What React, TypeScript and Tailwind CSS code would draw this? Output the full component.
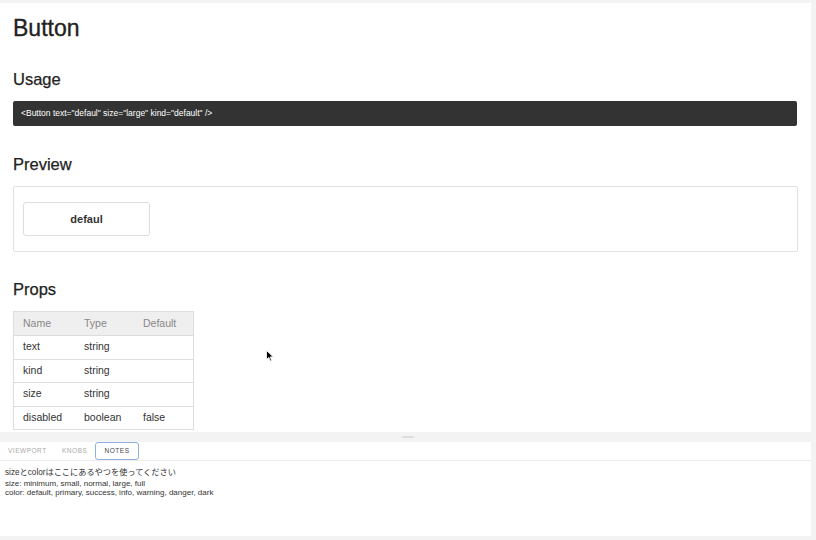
import React from "react";

const rows = [
  ["text", "string", ""],
  ["kind", "string", ""],
  ["size", "string", ""],
  ["disabled", "boolean", "false"],
];

export default function App() {
  return (
    <div className="w-[816px] h-[540px] bg-[#f3f3f3] flex flex-col overflow-hidden text-[#333]" style={{ fontFamily: '"Liberation Sans", "Noto Sans CJK JP", sans-serif' }}>
      <div className="h-[3px] shrink-0" />
      <div className="relative w-[811px] h-[429px] shrink-0 bg-white px-[13px] pt-[11px] flex flex-col overflow-hidden">
        <h1 className="shrink-0 text-[23px] leading-[28px] font-normal text-[#222] [-webkit-text-stroke:0.35px_#222]">Button</h1>
        <h2 className="shrink-0 mt-[27px] text-[16.5px] leading-[20px] text-[#222] [-webkit-text-stroke:0.25px_#222]">Usage</h2>
        <div className="shrink-0 mt-[12px] w-[784px] h-[25px] bg-[#333] rounded-[2px] px-[8px] flex items-center text-white text-[8.5px]">
          {'<Button text="defaul" size="large" kind="default" />'}
        </div>
        <h2 className="shrink-0 mt-[28px] text-[16.5px] leading-[20px] text-[#222] [-webkit-text-stroke:0.25px_#222]">Preview</h2>
        <div className="shrink-0 mt-[12px] w-[785px] h-[66px] border border-[#e2e2e2] rounded-[2px] px-[9px] pt-[15px]">
          <div className="w-[127px] h-[34px] border border-[#ddd] rounded-[3px] flex items-center justify-center text-[11px] font-bold text-[#333]">
            defaul
          </div>
        </div>
        <h2 className="shrink-0 mt-[27px] text-[16.5px] leading-[20px] text-[#222] [-webkit-text-stroke:0.25px_#222]">Props</h2>
        <div className="shrink-0 mt-[12px] w-[181px] border border-[#ddd] text-[10.5px]">
          <div className="h-[23px] bg-[#efefef] flex items-center text-[#888]">
            <div className="w-[61px] pl-[9px]">Name</div>
            <div className="w-[59px] pl-[9px]">Type</div>
            <div className="pl-[9px]">Default</div>
          </div>
          {rows.map((r) => (
            <div key={r[0]} className="h-[23.5px] border-t border-[#ddd] flex items-center text-[#333]">
              <div className="w-[61px] pl-[9px]">{r[0]}</div>
              <div className="w-[59px] pl-[9px]">{r[1]}</div>
              <div className="pl-[9px]">{r[2]}</div>
            </div>
          ))}
        </div>
        <svg className="absolute left-[266px] top-[347px]" width="8" height="12" viewBox="0 0 8 12">
          <path d="M0.5 0.5 L0.5 9.5 L2.8 7.4 L4.3 11 L5.6 10.4 L4.2 6.9 L7.3 6.9 Z" fill="#000" stroke="#fff" strokeWidth="0.8" />
        </svg>
      </div>
      <div className="h-[10px] shrink-0 flex items-center justify-center">
        <div className="w-[12px] h-[2px] bg-[#dcdcdc] rounded" />
      </div>
      <div className="w-[811px] h-[94px] shrink-0 bg-white flex flex-col">
        <div className="h-[19px] border-b border-[#ececec] flex items-stretch text-[6.5px] tracking-[0.08em]">
          <div className="ml-[8px] w-[40px] flex items-center text-[#aaa]">VIEWPORT</div>
          <div className="ml-[14px] w-[26px] flex items-center text-[#aaa]">KNOBS</div>
          <div className="ml-[7px] w-[44px] border-[1.5px] border-[#8fb0e0] rounded-[3px] flex items-center justify-center text-[#444]">NOTES</div>
        </div>
        <div className="px-[5px] pt-[6px] text-[#333]">
          <div className="text-[8.2px] leading-[12px]">sizeとcolorはここにあるやつを使ってください</div>
          <div className="text-[8px] leading-[9px]">size: minimum, small, normal, large, full</div>
          <div className="text-[8px] leading-[9px]">color: default, primary, success, info, warning, danger, dark</div>
        </div>
      </div>
    </div>
  );
}
